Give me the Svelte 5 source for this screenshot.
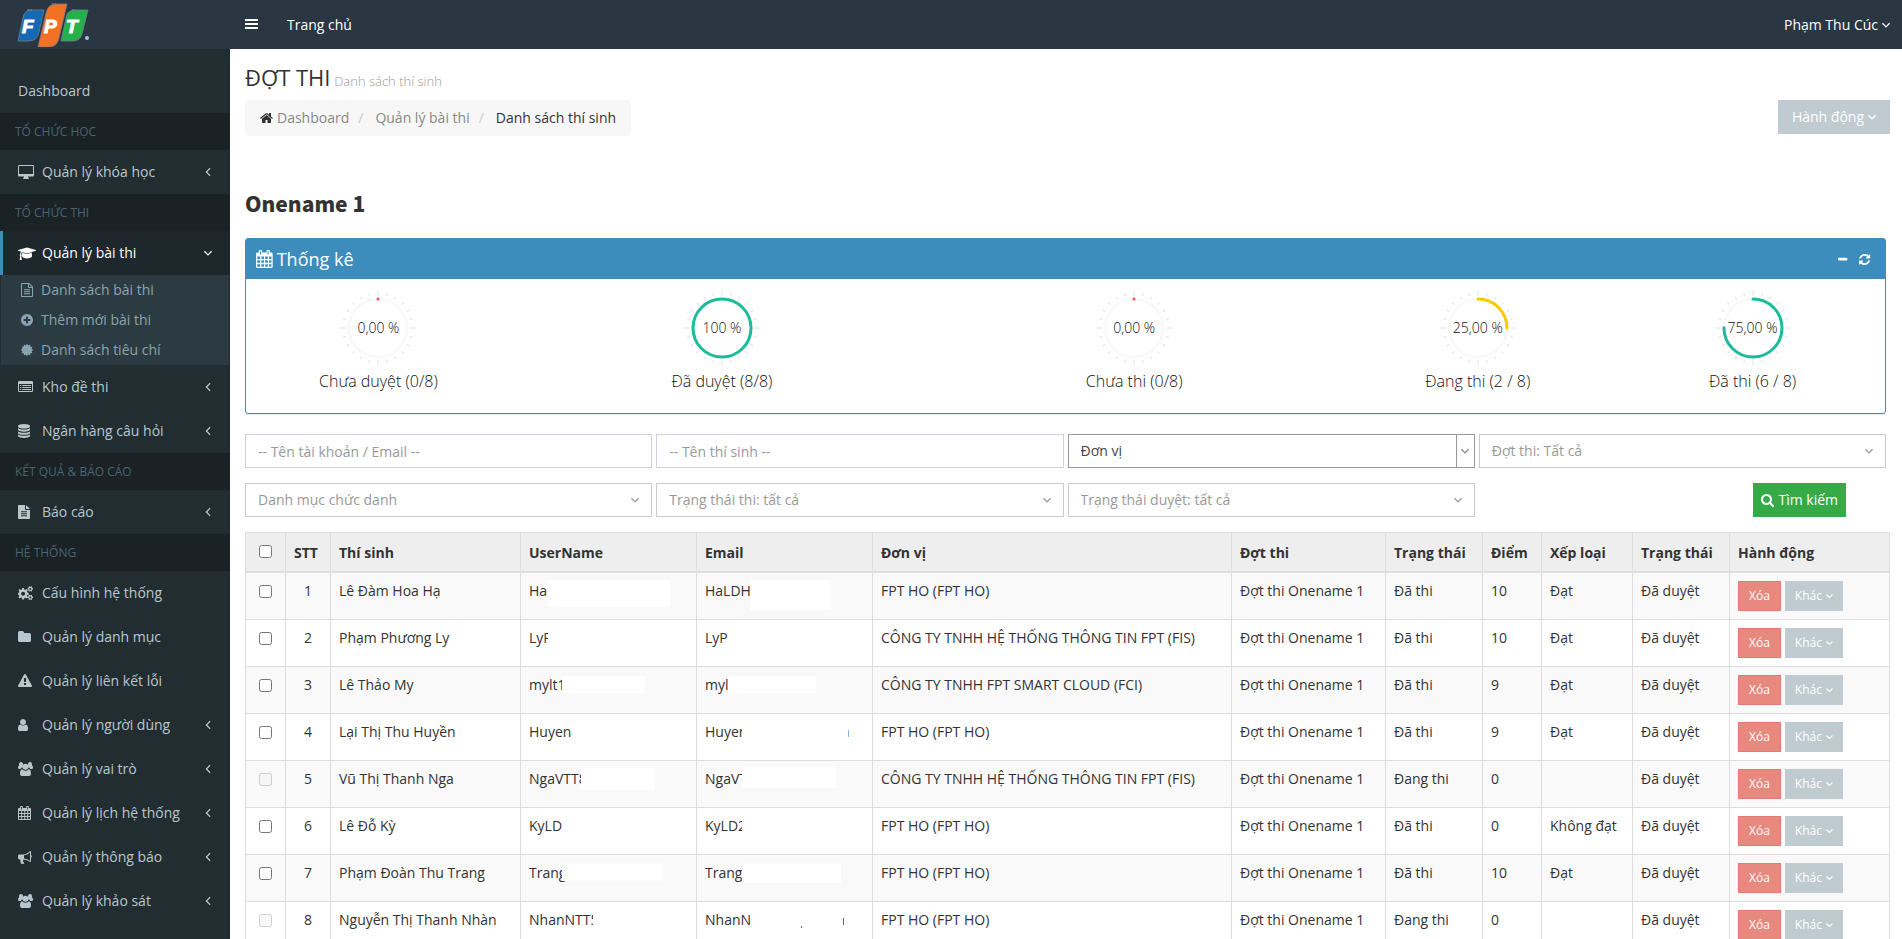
<script>
  const starPoints = Array.from({ length: 24 }, (_, i) => {
    const r = i % 2 ? 4.7 : 6.3;
    const a = (i * Math.PI) / 12;
    return `${(6 + r * Math.sin(a)).toFixed(2)} ${(7 - r * Math.cos(a)).toFixed(2)}`;
  });

  const icons = {
    home: { box: '64 0 1664 1792', d: 'M1472 992v480q0 26-19 45t-45 19h-384v-384h-256v384h-384q-26 0-45-19t-19-45v-480q0-1 .5-3t.5-3l575-474 575 474q1 2 1 6zm223-69l-62 74q-8 9-21 11h-3q-13 0-21-7l-692-577-692 577q-12 8-24 7-13-2-21-11l-62-74q-8-10-7-23.5t11-21.5l719-599q32-26 76-26t76 26l244 204v-195q0-14 9-23t23-9h192q14 0 23 9t9 23v408l219 182q10 8 11 21.5t-7 23.5z' },
    user: { box: '256 0 1280 1792', d: 'M1536 1399q0 109-62.5 187t-150.5 78h-854q-88 0-150.5-78t-62.5-187q0-85 8.5-160.5t31.5-152 58.5-131 94-89 134.5-34.5q131 128 313 128t313-128q76 0 134.5 34.5t94 89 58.5 131 31.5 152 8.5 160.5zm-256-887q0 159-112.5 271.5t-271.5 112.5-271.5-112.5-112.5-271.5 112.5-271.5 271.5-112.5 271.5 112.5 112.5 271.5z' },
    search: { box: '64 128 1664 1664', d: 'M1216 832q0-185-131.5-316.5t-316.5-131.5-316.5 131.5-131.5 316.5 131.5 316.5 316.5 131.5 316.5-131.5 131.5-316.5zm512 832q0 52-38 90t-90 38q-54 0-90-38l-343-342q-179 124-399 124-143 0-273.5-55.5t-225-150-150-225-55.5-273.5 55.5-273.5 150-225 225-150 273.5-55.5 273.5 55.5 225 150 150 225 55.5 273.5q0 220-124 399l343 343q37 37 37 90z' },
    refresh: { box: '128 0 1536 1792', d: 'M1639 1056q0 5-1 7-64 268-268 434.5t-478 166.5q-146 0-282.5-55t-243.5-157l-129 129q-19 19-45 19t-45-19-19-45v-448q0-26 19-45t45-19h448q26 0 45 19t19 45-19 45l-137 137q71 66 161 102t187 36q134 0 250-65t186-179q11-17 53-117 8-23 30-23h192q13 0 22.5 9.5t9.5 22.5zm25-800v448q0 26-19 45t-45 19h-448q-26 0-45-19t-19-45 19-45l138-138q-148-137-349-137-134 0-250 65t-186 179q-11 17-53 117-8 23-30 23h-199q-13 0-22.5-9.5t-9.5-22.5v-7q65-268 270-434.5t480-166.5q146 0 284 55.5t245 156.5l130-129q19-19 45-19t45 19 19 45z' },
    plus: { box: '128 0 1536 1792', d: 'M1344 960v-128q0-26-19-45t-45-19h-256v-256q0-26-19-45t-45-19h-128q-26 0-45 19t-19 45v256h-256q-26 0-45 19t-19 45v128q0 26 19 45t45 19h256v256q0 26 19 45t45 19h128q26 0 45-19t19-45v-256h256q26 0 45-19t19-45zm320-64q0 209-103 385.5t-279.5 279.5-385.5 103-385.5-103-279.5-279.5-103-385.5 103-385.5 279.5-279.5 385.5-103 385.5 103 279.5 279.5 103 385.5z' },
    folder: { box: '64 0 1664 1792', d: 'M1728 608v704q0 92-66 158t-158 66h-1216q-92 0-158-66t-66-158v-960q0-92 66-158t158-66h320q92 0 158 66t66 158v32h672q92 0 158 66t66 158z' },
    warning: { box: '0 0 1792 1792', d: 'M1024 1375v-190q0-14-9.5-23.5t-22.5-9.5h-192q-13 0-22.5 9.5t-9.5 23.5v190q0 14 9.5 23.5t22.5 9.5h192q13 0 22.5-9.5t9.5-23.5zm-2-374l18-459q0-12-10-19-13-11-24-11h-220q-11 0-24 11-10 7-10 21l17 457q0 10 10 16.5t24 6.5h185q14 0 23.5-6.5t10.5-16.5zm-14-934l768 1408q35 63-2 126-17 29-46.5 46t-63.5 17h-1536q-34 0-63.5-17t-46.5-46q-37-63-2-126l768-1408q17-31 47-49t65-18 65 18 47 49z' },
    bars: { box: '0 0 13 14', d: 'M0 1h13v2H0zM0 5h13v2H0zM0 9h13v2H0z' },
    desktop: { box: '0 0 16 14', d: 'M1.2 0h13.6Q16 0 16 1.2v9Q16 11.4 14.8 11.4H10l.5 1.6q.5.3.5 1H5q0-.7.5-1l.5-1.6H1.2Q0 11.4 0 10.2v-9Q0 0 1.2 0zM1 1.2v7.800h14V1.200q0-.2-.2-.2H1.200q-.2 0-.2.2z' },
    cap: { box: '0 0 18 14', d: 'M13.8 6.5l.2 3.5q0 1.200-1.500 1.800T9 12.500t-3.500-.7T4 10l.2-3.500 4.300 1.400q.5.100 1 0zM18 4.400q0 .3-.2.300L9.200 7.500H9L4 5.900q-.7.6-.8 2.300.6.300.6 1 0 .6-.5.900l.5 3.600q0 .3-.3.300H2q-.3 0-.3-.3l.5-3.600q-.5-.3-.5-.9 0-.7.6-1 .1-1.700.7-2.600L.2 4.700Q0 4.700 0 4.400t.2-.3L8.900 1.400h.2l8.700 2.700q.2 0 .2.300z' },
    fileO: { box: '0 0 12 14', d: 'M.8 0h7.400L12 3.800v9.400q0 .8-.8.800H.8q-.8 0-.8-.8V.8Q0 0 .8 0zM1 1v12h10V5H7.800Q7 5 7 4.200V1zm7 .2V4h2.800zM3 6.300h6v1H3zM3 8.300h6v1H3zM3 10.300h6v1H3z' },
    file: { box: '0 0 12 14', d: 'M.8 0H7v4.200q0 .8.800.8H12v8.200q0 .8-.8.800H.8q-.8 0-.8-.8V.8Q0 0 .8 0zM8 0l4 4H8zM3 6.300v1h6v-1zM3 8.300v1h6v-1zM3 10.300v1h6v-1z' },
    badge: { box: '0 0 12 14', d: `M${starPoints.join('L')}z` },
    list: { box: '0 0 15 14', d: 'M1.200 1h12.600Q15 1 15 2.200v8.600q0 1.200-1.200 1.200H1.200Q0 12 0 10.800V2.200Q0 1 1.200 1zM1 4v6.700q0 .3.300.3h12.400q.3 0 .3-.3V4zM2 5h1.200v1H2zM2 7h1.200v1H2zM2 9h1.200v1H2zM4.200 5H13v1H4.200zM4.200 7H13v1H4.200zM4.200 9H13v1H4.200z' },
    database: { box: '0 0 12 14', d: 'M0 1.900C0 .8 2.500 0 6 0s6 .8 6 1.900v.8c0 1.100-2.500 1.900-6 1.900S0 3.800 0 2.700zM0 4.300c1.200.9 3.500 1.300 6 1.300s4.800-.4 6-1.300v1.500C12 6.900 9.500 7.700 6 7.700S0 6.900 0 5.800zM0 7.400c1.200.9 3.500 1.300 6 1.300s4.800-.4 6-1.300v1.500c0 1.100-2.500 1.900-6 1.900S0 10 0 8.900zM0 10.500c1.200.9 3.500 1.300 6 1.300s4.800-.4 6-1.300V12c0 1.100-2.500 1.900-6 1.900S0 13.100 0 12z' },
    cogs: { box: '0 0 15 14', d: 'M4.200 2h1.800l.3 1.500 1 .4 1.300-.8 1.200 1.200-.8 1.300.4 1 1.400.3v1.800l-1.400.3-.4 1 .8 1.300-1.200 1.200-1.300-.8-1 .4L6 13.500H4.200L3.900 12l-1-.4-1.300.8-1.200-1.200.8-1.300-.3-.9L0 8.700V6.900l1-.3.300-1L.5 4.300l1.200-1.200 1.300.8.900-.4zM5.100 5.700a2 2 0 1 0 0 4 2 2 0 0 0 0-4zM11.500.2l.8.700.8-.7 1 .6-.2 1 1.100.4v1.200l-1.100.4.2 1.100-1 .6-.8-.8-.8.8-1-.6.200-1.100-1.100-.4V2.200l1.100-.4-.2-1zm.8 1.700a1 1 0 1 0 0 2 1 1 0 0 0 0-2zM11.500 8.700l.8.700.8-.7 1 .6-.2 1 1.100.4v1.200l-1.100.4.2 1.100-1 .6-.8-.8-.8.800-1-.6.2-1.100-1.100-.4v-1.200l1.100-.4-.2-1zm.8 1.700a1 1 0 1 0 0 2 1 1 0 0 0 0-2z' },
    users: { box: '0 0 15 14', d: 'M3 0a2 2 0 0 1 1.800 2.900Q4.300 4 4.600 5.300 3.400 5.600 2.700 7H1.300Q0 7 0 5.700 0 3.400 1.200 3.600 1 2.800 1 2a2 2 0 0 1 2-2zM12 0a2 2 0 0 1 2 2q0 .8-.2 1.600Q15 3.400 15 5.700 15 7 13.700 7h-1.400q-.7-1.400-1.900-1.700.3-1.300-.2-2.400A2 2 0 0 1 12 0zM7.500 1.800a3 3 0 1 1 0 6 3 3 0 0 1 0-6zM4.200 7.300Q5.700 8.800 7.500 8.800t3.300-1.500Q13 7.400 13 11.800q0 2.200-2 2.200H4q-2 0-2-2.200 0-4.400 2.200-4.500z' },
    calendar: { box: '0 0 13 14', d: 'M3 0h1q.8 0 .8.800V2h3.400V.8Q8.200 0 9 0h1q.8 0 .8.800V2h1.200q1 0 1 1v10q0 1-1 1H1q-1 0-1-1V3q0-1 1-1h1.200V.8Q2.200 0 3 0zM3.200 1v2.500h.8V1zM9 1v2.500h.8V1zM1 5v2h2.200V5zM4.200 5v2h2V5zM7.200 5v2h2V5zM10.200 5v2H12V5zM1 8v2h2.200V8zM4.200 8v2h2V8zM7.200 8v2h2V8zM10.200 8v2H12V8zM1 11v2h2.200v-2zM4.200 11v2h2v-2zM7.200 11v2h2v-2zM10.200 11v2H12v-2z' },
    bullhorn: { box: '0 0 14 14', d: 'M13 5.200a1.200 1.200 0 0 1 0 2.300V11q0 1-1 1-2.700-2.300-6.400-2.600-.9.500-.4 1.400-.5.700.2 1.300.3.600 1 1-.5 1-2.200.9-1-.1-1.400-.7-.9-2.200-.3-3.900H1.300Q0 9.400 0 8.100V5.700q0-1.300 1.300-1.300H5Q9 4.400 12 1q1 0 1 1zM12 2.600Q9.300 5 6 5.300v3.200q3.300.3 6 2.600z' },
    left: { box: '0 0 6 14', d: 'M4.700 2.700l.9.900L2.400 7l3.200 3.400-.9.900L.5 7z' },
    down: { box: '0 0 8 14', d: 'M.9 4.800L0 5.700l4 4 4-4-.9-.9L4 7.900z' },
    minus: { box: '0 0 10 14', d: 'M.8 5h8.400q.8 0 .8.800v1.400q0 .8-.8.800H.8Q0 8 0 7.200V5.800Q0 5 .8 5z' }
  };

  const menu = [
    { section: 'TỔ CHỨC HỌC' },
    { label: 'Quản lý khóa học', icon: 'desktop', arrow: true },
    { section: 'TỔ CHỨC THI' },
    {
      label: 'Quản lý bài thi', icon: 'cap', arrow: true, active: true,
      children: [
        { label: 'Danh sách bài thi', icon: 'fileO' },
        { label: 'Thêm mới bài thi', icon: 'plus' },
        { label: 'Danh sách tiêu chí', icon: 'badge' }
      ]
    },
    { label: 'Kho đề thi', icon: 'list', arrow: true },
    { label: 'Ngân hàng câu hỏi', icon: 'database', arrow: true },
    { section: 'KẾT QUẢ & BÁO CÁO' },
    { label: 'Báo cáo', icon: 'file', arrow: true },
    { section: 'HỆ THỐNG' },
    { label: 'Cấu hình hệ thống', icon: 'cogs' },
    { label: 'Quản lý danh mục', icon: 'folder' },
    { label: 'Quản lý liên kết lỗi', icon: 'warning' },
    { label: 'Quản lý người dùng', icon: 'user', arrow: true },
    { label: 'Quản lý vai trò', icon: 'users', arrow: true },
    { label: 'Quản lý lịch hệ thống', icon: 'calendar', arrow: true },
    { label: 'Quản lý thông báo', icon: 'bullhorn', arrow: true },
    { label: 'Quản lý khảo sát', icon: 'users', arrow: true }
  ];

  const stats = [
    { percent: 0, text: '0,00 %', label: 'Chưa duyệt (0/8)', color: '#ef4e58' },
    { percent: 100, text: '100 %', label: 'Đã duyệt (8/8)', color: '#1bbc9b' },
    { percent: 0, text: '0,00 %', label: 'Chưa thi (0/8)', color: '#ef4e58' },
    { percent: 25, text: '25,00 %', label: 'Đang thi (2 / 8)', color: '#f8cb00' },
    { percent: 75, text: '75,00 %', label: 'Đã thi (6 / 8)', color: '#1bbc9b' }
  ];

  const ticks = Array.from({ length: 24 }, (_, i) => i);
  const round = 2 * Math.PI * 29;

  const columns = ['STT', 'Thí sinh', 'UserName', 'Email', 'Đơn vị', 'Đợt thi', 'Trạng thái', 'Điểm', 'Xếp loại', 'Trạng thái', 'Hành động'];

  const HO = 'FPT HO (FPT HO)';
  const FIS = 'CÔNG TY TNHH HỆ THỐNG THÔNG TIN FPT (FIS)';
  const FCI = 'CÔNG TY TNHH FPT SMART CLOUD (FCI)';

  // covers: [left, top, width, height, color] of the blocks that hide part of an account
  const rows = [
    { name: 'Lê Đàm Hoa Hạ', user: 'Ha', userCovers: [[19, -1, 122, 27]], email: 'HaLDH', emailCovers: [[45, -1, 81, 30]], unit: HO, state: 'Đã thi', score: 10, grade: 'Đạt' },
    { name: 'Phạm Phương Ly', user: 'LyP', userCovers: [[19, 0, 100, 24]], email: 'LyP', emailCovers: [], unit: FIS, state: 'Đã thi', score: 10, grade: 'Đạt' },
    { name: 'Lê Thảo My', user: 'mylt1', userCovers: [[33, 1, 83, 17]], email: 'myl', emailCovers: [[23, 1, 88, 17]], unit: FCI, state: 'Đã thi', score: 9, grade: 'Đạt' },
    { name: 'Lại Thị Thu Huyền', user: 'Huyen', userCovers: [], email: 'Huyen', emailCovers: [[37, 0, 100, 20], [143, 8, 1, 7, '#7ab8ea']], unit: HO, state: 'Đã thi', score: 9, grade: 'Đạt' },
    { name: 'Vũ Thị Thanh Nga', user: 'NgaVTT8', userCovers: [[52, -1, 74, 22]], email: 'NgaVT', emailCovers: [[37, -2, 94, 21]], unit: FIS, state: 'Đang thi', score: 0, grade: '', locked: true },
    { name: 'Lê Đỗ Kỳ', user: 'KyLD', userCovers: [], email: 'KyLD2', emailCovers: [[37, 0, 100, 20]], unit: HO, state: 'Đã thi', score: 0, grade: 'Không đạt' },
    { name: 'Phạm Đoàn Thu Trang', user: 'Trang', userCovers: [[33, 0, 101, 18]], email: 'Trang', emailCovers: [[37, 0, 99, 20]], unit: HO, state: 'Đã thi', score: 10, grade: 'Đạt' },
    { name: 'Nguyễn Thị Thanh Nhàn', user: 'NhanNTT5', userCovers: [[64, 0, 60, 20]], email: 'NhanN', emailCovers: [[96, 16, 1, 2, '#666'], [138, 8, 1, 7, '#666']], unit: HO, state: 'Đang thi', score: 0, grade: '', locked: true }
  ];

  function coverStyle([left, top, width, height, color = '#fff']) {
    return `left:${left}px;top:${top}px;width:${width}px;height:${height}px;background:${color}`;
  }
</script>

{#snippet icon(name)}
  <svg class="icon" viewBox={icons[name].box} aria-hidden="true"><path fill-rule="evenodd" d={icons[name].d} /></svg>
{/snippet}

{#snippet account(text, covers)}
  <div class="account">
    {text}
    {#each covers as cover}
      <span class="cover" style={coverStyle(cover)}></span>
    {/each}
  </div>
{/snippet}

{#snippet dropdown(id, label)}
  <div class="field">
    <select {id} aria-label={label}><option>{label}</option></select>
    {@render icon('down')}
  </div>
{/snippet}

<div class="app">
  <header class="topbar">
    <a class="logo" href="#home" aria-label="FPT">
      <svg width="74" height="45" viewBox="0 0 74 45">
        <path fill="#1568b3" stroke="#71808c" stroke-width=".8" d="M10 8h17l-5 22q-2 9-10 9H1l5-23q1-8 9-8z" />
        <path fill="#24b04b" stroke="#71808c" stroke-width=".8" d="M55 8h16l-6 24q-2 7-9 7H44l5-23q1-8 9-8z" />
        <path fill="#f37125" stroke="#71808c" stroke-width=".8" d="M35 2h15l-8 34q-2 9-10 9H21l8-34q2-9 10-9z" />
        <circle cx="70" cy="36" r="2" fill="#9cc9f0" />
        <text x="5" y="31">F</text>
        <text x="27" y="31">P</text>
        <text x="49" y="31">T</text>
      </svg>
    </a>
    <button class="toggle" aria-label="Menu">{@render icon('bars')}</button>
    <a class="top-link" href="#trang-chu">Trang chủ</a>
    <button class="account-menu">Phạm Thu Cúc {@render icon('down')}</button>
  </header>

  <div class="body">
    <nav class="sidebar">
      <ul>
        <li><a class="item" href="#dashboard">Dashboard</a></li>
        {#each menu as entry}
          {#if entry.section}
            <li class="section">{entry.section}</li>
          {:else}
            <li>
              <a class="item" class:active={entry.active} href="#menu">
                <span class="slot">{@render icon(entry.icon)}</span>
                <span>{entry.label}</span>
                {#if entry.arrow}
                  <span class="arrow">{@render icon(entry.active ? 'down' : 'left')}</span>
                {/if}
              </a>
              {#if entry.children}
                <ul class="submenu">
                  {#each entry.children as child}
                    <li>
                      <a href="#menu"><span class="slot">{@render icon(child.icon)}</span><span>{child.label}</span></a>
                    </li>
                  {/each}
                </ul>
              {/if}
            </li>
          {/if}
        {/each}
      </ul>
    </nav>

    <main>
      <h1>ĐỢT THI <small>Danh sách thí sinh</small></h1>
      <div class="toolbar">
        <ol class="breadcrumb">
          <li>{@render icon('home')}<a href="#dashboard">Dashboard</a></li>
          <li><a href="#bai-thi">Quản lý bài thi</a></li>
          <li>Danh sách thí sinh</li>
        </ol>
        <button class="btn gray">Hành động {@render icon('down')}</button>
      </div>

      <h2>Onename 1</h2>

      <section class="box">
        <header>
          <h3>{@render icon('calendar')}Thống kê</h3>
          <button aria-label="Thu gọn">{@render icon('minus')}</button>
          <button aria-label="Làm mới">{@render icon('refresh')}</button>
        </header>
        <div class="stats">
          {#each stats as stat}
            <figure>
              <div class="gauge">
                <svg width="76" height="76" viewBox="-38 -38 76 76">
                  {#each ticks as tick}
                    <path class="tick" d={tick % 6 === 0 ? 'M0 -37.500v5' : 'M0 -36v3'} transform="rotate({tick * 15})" />
                  {/each}
                  <circle class="track" r="29" />
                  <circle
                    class="value"
                    r="29"
                    stroke={stat.color}
                    stroke-dasharray="{Math.max(stat.percent / 100 * round, 0.01)} {round}"
                    transform="rotate(-90)"
                  />
                </svg>
                <span>{stat.text}</span>
              </div>
              <figcaption>{stat.label}</figcaption>
            </figure>
          {/each}
        </div>
      </section>

      <form class="filters">
        <input type="text" aria-label="Tên tài khoản / Email" placeholder="-- Tên tài khoản / Email --" />
        <input type="text" aria-label="Tên thí sinh" placeholder="-- Tên thí sinh --" />
        <div class="field combo">
          <select id="don-vi" aria-label="Đơn vị"><option>Đơn vị</option></select>
          <span class="handle">{@render icon('down')}</span>
        </div>
        {@render dropdown('dot-thi', 'Đợt thi: Tất cả')}
        {@render dropdown('chuc-danh', 'Danh mục chức danh')}
        {@render dropdown('trang-thai-thi', 'Trạng thái thi: tất cả')}
        {@render dropdown('trang-thai-duyet', 'Trạng thái duyệt: tất cả')}
        <div class="submit">
          <button type="button" class="btn green">{@render icon('search')}Tìm kiếm</button>
        </div>
      </form>

      <table>
        <colgroup>
          <col class="c-check" /><col class="c-stt" /><col class="c-name" /><col class="c-account" /><col class="c-account" />
          <col /><col class="c-exam" /><col class="c-state" /><col class="c-score" /><col class="c-grade" />
          <col class="c-state" /><col class="c-action" />
        </colgroup>
        <thead>
          <tr>
            <th><input type="checkbox" aria-label="Chọn tất cả" /></th>
            {#each columns as column}
              <th>{column}</th>
            {/each}
          </tr>
        </thead>
        <tbody>
          {#each rows as row, i}
            <tr>
              <td><input type="checkbox" disabled={row.locked} aria-label={row.name} /></td>
              <td class="center">{i + 1}</td>
              <td>{row.name}</td>
              <td>{@render account(row.user, row.userCovers)}</td>
              <td>{@render account(row.email, row.emailCovers)}</td>
              <td>{row.unit}</td>
              <td>Đợt thi Onename 1</td>
              <td>{row.state}</td>
              <td>{row.score}</td>
              <td>{row.grade}</td>
              <td>Đã duyệt</td>
              <td>
                <div class="actions">
                  <button class="btn small red">Xóa</button>
                  <button class="btn small gray">Khác {@render icon('down')}</button>
                </div>
              </td>
            </tr>
          {/each}
        </tbody>
      </table>
    </main>
  </div>
</div>

<style>
  :global(body) {
    margin: 0;
    background: #fff;
  }

  .app {
    display: flex;
    flex-direction: column;
    height: 100vh;
    overflow: hidden;
    font-family: 'Open Sans', 'Noto Sans', sans-serif;
    font-size: 14px;
    line-height: 20px;
    color: #333;
  }

  .app :global(*) {
    box-sizing: border-box;
  }

  ul,
  ol {
    list-style: none;
    margin: 0;
    padding: 0;
  }

  a {
    color: inherit;
    text-decoration: none;
  }

  button,
  input,
  select {
    font: inherit;
    margin: 0;
  }

  button {
    display: inline-flex;
    align-items: center;
    gap: 4px;
    padding: 0;
    border: 0;
    background: none;
    color: #fff;
    cursor: pointer;
  }

  .icon {
    height: 14px;
    flex: none;
    fill: currentColor;
    overflow: visible;
  }

  .topbar {
    display: flex;
    align-items: center;
    flex: none;
    height: 49px;
    padding-right: 12px;
    background: #2b3643;
    color: #fff;
  }

  .logo {
    display: flex;
    width: 245px;
    padding-left: 17px;
  }

  .logo text {
    font: italic 700 19px 'Liberation Sans', sans-serif;
    fill: #fff;
    stroke: #fff;
    stroke-width: 1;
  }

  .top-link {
    margin-left: 29px;
  }

  .account-menu {
    margin-left: auto;
  }

  .body {
    display: flex;
    flex: 1;
    align-items: stretch;
    min-height: 0;
  }

  .sidebar {
    flex: none;
    width: 230px;
    padding-top: 20px;
    background: #222d32;
    color: #b8c7ce;
  }

  .item {
    display: flex;
    align-items: center;
    height: 44px;
    padding: 0 15px;
    border-left: 3px solid transparent;
  }

  .item.active {
    border-left-color: #3c8dbc;
    background: #1e282c;
    color: #fff;
  }

  .slot {
    display: flex;
    width: 20px;
    margin-right: 4px;
  }

  .arrow {
    display: flex;
    justify-content: center;
    width: 14px;
    margin-left: auto;
  }

  .section {
    height: 37px;
    padding: 0 15px;
    background: #1a2226;
    color: #4b646f;
    font-size: 12px;
    line-height: 37px;
  }

  .submenu {
    margin: 0 1px;
    background: #2c3b41;
    color: #8aa4af;
  }

  .submenu a {
    display: flex;
    align-items: center;
    height: 30px;
    padding-left: 20px;
  }

  .submenu .slot {
    margin-right: 0;
  }

  main {
    flex: 1;
    min-width: 0;
    padding: 14px 12px 0 15px;
  }

  h1 {
    margin: 0 0 5px;
    font-size: 22px;
    font-weight: 400;
    line-height: 28px;
  }

  h1 small {
    margin-left: -2px;
    color: #999;
    font-size: 13px;
    font-weight: 300;
  }

  .toolbar {
    display: flex;
    justify-content: space-between;
    align-items: flex-start;
  }

  .breadcrumb {
    display: flex;
    height: 36px;
    padding: 8px 15px;
    border-radius: 4px;
    background: #f7f7f7;
  }

  .breadcrumb li {
    display: flex;
    align-items: center;
    gap: 4px;
  }

  .breadcrumb li + li::before {
    content: '/';
    padding: 0 8px 0 9px;
    color: #ccc;
  }

  .breadcrumb a {
    color: #888;
  }

  .btn {
    height: 34px;
    padding: 0 14px;
  }

  .gray {
    background: #bfcad1;
  }

  .green {
    padding: 0 8px;
    background: #35aa47;
  }

  .green :global(.icon) {
    height: 13px;
  }

  .red {
    border: 1px solid #e57a6e;
    background: #e7897e;
  }

  .small {
    height: 30px;
    padding: 0 10px;
    font-size: 12px;
  }

  .small :global(.icon) {
    height: 12px;
  }

  h2 {
    margin: 52px 0 20px;
    font-family: 'Noto Sans CJK JP', sans-serif;
    font-size: 21px;
    font-weight: 900;
    line-height: 30px;
  }

  .box {
    height: 176px;
    margin-right: 4px;
    border: 1px solid #3c8dbc;
    border-radius: 3px;
    box-shadow: 0 1px 1px rgba(0, 0, 0, 0.1);
  }

  .box header {
    display: flex;
    align-items: center;
    gap: 12px;
    height: 40px;
    padding: 0 15px 0 10px;
    background: #3c8dbc;
    color: #fff;
  }

  .box header button :global(.icon) {
    height: 13px;
  }

  h3 {
    display: flex;
    align-items: center;
    gap: 4px;
    margin: 0 auto 0 0;
    font-size: 18px;
    font-weight: 400;
  }

  h3 :global(.icon) {
    height: 18px;
  }

  .stats {
    display: grid;
    grid-template-columns: 2fr 3fr 3fr 2fr 2fr;
    margin: 0 -5px;
    padding-top: 11px;
  }

  figure {
    display: flex;
    flex-direction: column;
    align-items: center;
    margin: 0;
    color: #111;
    font-weight: 300;
  }

  .gauge {
    display: grid;
    place-items: center;
  }

  .gauge > * {
    grid-area: 1 / 1;
  }

  .gauge circle,
  .tick {
    fill: none;
    stroke-width: 3;
  }

  .value {
    stroke-linecap: round;
  }

  .track {
    stroke: #f9f9f9;
  }

  .tick {
    stroke: #dfe0e0;
    stroke-width: 1;
  }

  figcaption {
    margin-top: 3px;
    font-size: 16px;
    line-height: 24px;
  }

  .filters {
    display: grid;
    grid-template-columns: repeat(4, 1fr);
    gap: 15px 4px;
    margin: 20px 4px 15px 0;
  }

  .filters > input,
  select {
    width: 100%;
    height: 34px;
    padding: 0 12px;
    border: 1px solid #c8cacd;
    border-radius: 0;
    background: #fff;
    color: #999;
    outline: 0;
  }

  .filters > input {
    border-color: #cfd1de;
  }

  .filters > input::placeholder {
    color: #999;
  }

  select {
    appearance: none;
  }

  .field {
    display: grid;
    align-items: center;
  }

  .field > :global(*) {
    grid-area: 1 / 1;
  }

  .field > :global(.icon) {
    justify-self: end;
    margin-right: 13px;
    color: #999;
    pointer-events: none;
  }

  .combo select {
    border-color: #999;
    color: #444;
  }

  .handle {
    display: flex;
    align-items: center;
    justify-content: center;
    justify-self: end;
    width: 19px;
    height: 34px;
    border: 1px solid #999;
    color: #888;
    pointer-events: none;
  }

  .submit {
    display: flex;
    justify-content: flex-end;
    padding-right: 40px;
  }

  table {
    width: 100%;
    table-layout: fixed;
    border-collapse: collapse;
  }

  .c-check {
    width: 40px;
  }

  .c-stt {
    width: 45px;
  }

  .c-name {
    width: 190px;
  }

  .c-account {
    width: 176px;
  }

  .c-exam {
    width: 154px;
  }

  .c-state {
    width: 97px;
  }

  .c-score {
    width: 59px;
  }

  .c-grade {
    width: 91px;
  }

  .c-action {
    width: 160px;
  }

  th,
  td {
    padding: 8px;
    border: 1px solid #ddd;
    text-align: left;
    vertical-align: top;
    white-space: nowrap;
  }

  th {
    padding: 10px 8px 8px;
    border-bottom-width: 2px;
    background: #eee;
    font-weight: 700;
  }

  td {
    height: 47px;
  }

  tbody tr:nth-child(odd) {
    background: #f9f9f9;
  }

  .center {
    text-align: center;
  }

  th input,
  td input {
    display: block;
    width: 13px;
    height: 13px;
    margin: 4px auto 0;
  }

  th input {
    margin-top: 2px;
  }

  .account {
    position: relative;
    height: 20px;
  }

  .cover {
    position: absolute;
  }

  .actions {
    display: flex;
    gap: 4px;
  }
</style>
